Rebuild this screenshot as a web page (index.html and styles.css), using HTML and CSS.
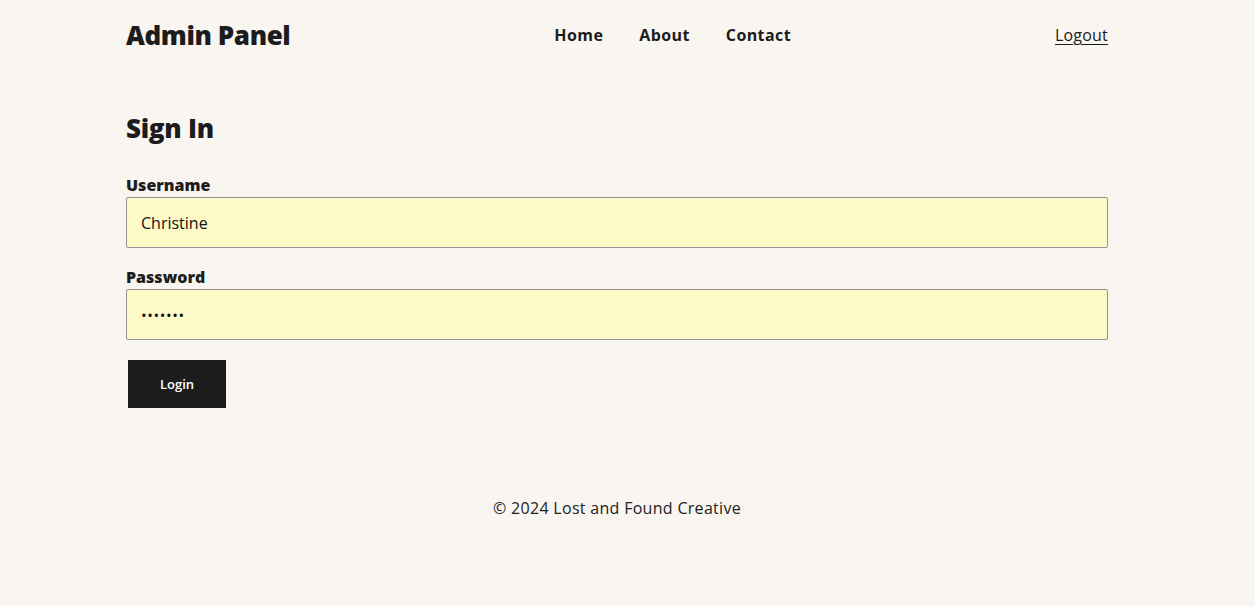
FILE: index.html
```html
<!DOCTYPE html>
<html lang="en">
<head>
<meta charset="utf-8">
<title>Admin Panel</title>
<link rel="stylesheet" href="styles.css">
</head>
<body>
<div class="page">
  <header class="header">
    <div class="brand">Admin Panel</div>
    <nav class="nav">
      <a href="#">Home</a>
      <a href="#">About</a>
      <a href="#">Contact</a>
    </nav>
    <a class="logout" href="#">Logout</a>
  </header>
  <main class="main">
    <h2 class="title">Sign In</h2>
    <form class="form">
      <label class="label" for="u">Username</label>
      <input class="field" id="u" type="text" value="Christine">
      <label class="label" for="p">Password</label>
      <input class="field field-pass" id="p" type="password" value="1234567">
      <button class="btn" type="button">Login</button>
    </form>
  </main>
  <footer class="footer">© 2024 Lost and Found Creative</footer>
</div>
</body>
</html>
```

FILE: styles.css
```css
* { box-sizing: border-box; }
html, body { margin: 0; padding: 0; }
body {
  background: #f9f5f0;
  color: #1c1c1c;
  font-family: "Open Sans", "DejaVu Sans", sans-serif;
}
.page {
  width: 1234px;
}
.header, .main, .footer {
  width: 982px;
  margin: 0 auto;
}
.header {
  height: 70px;
  display: flex;
  align-items: center;
  justify-content: space-between;
}
.brand {
  font-size: 26px;
  font-weight: 800;
  letter-spacing: -0.4px;
}
.nav {
  display: flex;
  gap: 36px;
}
.nav a {
  color: #1c1c1c;
  text-decoration: none;
  font-size: 16px;
  font-weight: 700;
  letter-spacing: 0.4px;
}
.logout {
  color: #1c1c1c;
  font-size: 16px;
  letter-spacing: 0.2px;
  text-decoration: underline;
  text-underline-offset: 3px;
}
.main {
  padding-top: 42px;
}
.title {
  margin: 0 0 31px;
  font-size: 26px;
  font-weight: 800;
  line-height: 32px;
  letter-spacing: -0.3px;
}
.form {
  display: flex;
  flex-direction: column;
  align-items: flex-start;
}
.label {
  font-size: 16px;
  font-weight: 800;
  line-height: 20px;
  margin-bottom: 2px;
}
.field {
  width: 100%;
  height: 51px;
  margin: 0 0 19px;
  padding: 0 14px;
  border: 1px solid #959195;
  border-radius: 2px;
  background: #fefac8;
  font-family: inherit;
  font-size: 16px;
  color: #111;
  outline: none;
}
.field-pass {
  font-size: 15px;
  letter-spacing: 0.6px;
  margin-bottom: 20px;
}
.btn {
  margin: 0 0 0 2px;
  width: 98px;
  height: 48px;
  border: none;
  background: #1c1c1c;
  color: #fff;
  font-family: inherit;
  font-size: 13px;
  font-weight: 600;
}
.footer {
  margin-top: 88px;
  text-align: center;
  font-size: 16px;
  line-height: 24px;
  letter-spacing: 0.3px;
  color: #222;
}
```
